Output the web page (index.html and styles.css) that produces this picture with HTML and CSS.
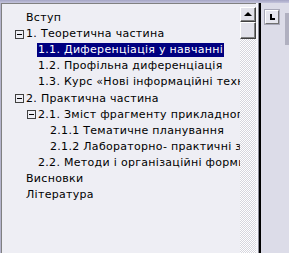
FILE: index.html
```html
<!DOCTYPE html>
<html lang="uk">
  <head>
    <meta charset="UTF-8">
    <meta name="viewport" content="width=device-width, initial-scale=1.0">
    <title>Зміст</title>
    <link rel="stylesheet" href="styles.css">
  </head>
  <body>
    <div class="topbar"></div>

    <div class="main">
      <div class="tree">
        <div class="row lvl0"><span class="slot"></span><span class="label">Вступ</span></div>
        <div class="row lvl0">
          <span class="slot"><svg class="toggle" width="9" height="9" viewBox="0 0 9 9"><rect x="0.5" y="0.5" width="8" height="8" fill="none" stroke="#404040"/><path d="M2 4.5h5" stroke="#000"/></svg></span>
          <span class="label">1. Теоретична частина</span>
        </div>
        <div class="row lvl1"><span class="slot"></span><span class="label selected">1.1. Диференціація у навчанні</span></div>
        <div class="row lvl1"><span class="slot"></span><span class="label">1.2. Профільна диференціація</span></div>
        <div class="row lvl1"><span class="slot"></span><span class="label">1.3. Курс «Нові інформаційні технології»</span></div>
        <div class="row lvl0">
          <span class="slot"><svg class="toggle" width="9" height="9" viewBox="0 0 9 9"><rect x="0.5" y="0.5" width="8" height="8" fill="none" stroke="#404040"/><path d="M2 4.5h5" stroke="#000"/></svg></span>
          <span class="label">2. Практична частина</span>
        </div>
        <div class="row lvl1">
          <span class="slot"><svg class="toggle" width="9" height="9" viewBox="0 0 9 9"><rect x="0.5" y="0.5" width="8" height="8" fill="none" stroke="#404040"/><path d="M2 4.5h5" stroke="#000"/></svg></span>
          <span class="label">2.1. Зміст фрагменту прикладного курсу</span>
        </div>
        <div class="row lvl2"><span class="slot"></span><span class="label">2.1.1 Тематичне планування</span></div>
        <div class="row lvl2"><span class="slot"></span><span class="label">2.1.2 Лабораторно- практичні заняття</span></div>
        <div class="row lvl1"><span class="slot"></span><span class="label">2.2. Методи і організаційні форми навчання</span></div>
        <div class="row lvl0"><span class="slot"></span><span class="label">Висновки</span></div>
        <div class="row lvl0"><span class="slot"></span><span class="label">Література</span></div>
      </div>

      <div class="vscroll">
        <div class="sbtn"><span class="arrow-up"></span></div>
        <div class="sbtn thumb"></div>
        <div class="track"></div>
      </div>

      <div class="splitter"></div>

      <div class="side">
        <div class="side-btn"><span class="corner"></span></div>
        <div class="side-bar"></div>
      </div>
    </div>
  </body>
</html>
```

FILE: styles.css
```css
html,
body {
  margin: 0;
  height: 100%;
}
body {
  font-family: "DejaVu Sans", Verdana, sans-serif;
  font-size: 11px;
  letter-spacing: 0.3px;
  color: #000;
  background-color: #b4b4cc;
  display: flex;
  flex-direction: column;
  overflow: hidden;
}
.topbar {
  height: 3px;
  background: linear-gradient(#a4a4c4, #c4c4dc);
}
.main {
  flex: 1;
  display: flex;
  padding-left: 1px;
  min-height: 0;
}
.tree {
  width: 238px;
  border-left: 1px solid #808080;
  border-top: 1px solid #808080;
  background-color: #eeeef4;
  padding-top: 6px;
  overflow: hidden;
}
.row {
  display: flex;
  align-items: center;
  height: 16.1px;
  white-space: nowrap;
}
.lvl0 {
  padding-left: 13px;
}
.lvl1 {
  padding-left: 25px;
}
.lvl2 {
  padding-left: 37px;
}
.slot {
  display: flex;
  align-items: center;
  flex: 0 0 11px;
  width: 11px;
  height: 16px;
}
.toggle {
  display: block;
}
.label {
  display: inline-block;
  line-height: 14px;
  padding: 0 1px 0 0;
}
.selected {
  background-color: #000080;
  color: #fff;
  margin-left: -1px;
  padding-left: 1px;
}
.vscroll {
  width: 16px;
  display: flex;
  flex-direction: column;
  border-top: 1px solid #808080;
  padding-top: 3px;
  background-color: #eeeef4;
}
.sbtn {
  box-sizing: border-box;
  height: 15px;
  background-color: #e2e2ea;
  border: 1px solid;
  border-color: #ffffff #404040 #404040 #ffffff;
  box-shadow: inset -1px -1px 0 #808080;
  display: flex;
  align-items: center;
  justify-content: center;
}
.thumb {
  height: 17px;
}
.arrow-up {
  width: 0;
  height: 0;
  border-left: 4px solid transparent;
  border-right: 4px solid transparent;
  border-bottom: 4px solid #000;
  margin-top: -1px;
}
.track {
  flex: 1;
  background: repeating-conic-gradient(#ffffff 0 25%, #d6d6de 0 50%) 0 0 / 2px 2px;
}
.splitter {
  width: 2px;
  background-color: #f6f6fa;
  border-right: 1px solid #8c8c98;
  box-shadow: 2px 0 0 #000;
  margin-right: 2px;
}
.side {
  flex: 1;
  display: flex;
  align-items: flex-start;
  background-color: #dcdce8;
  padding: 7px 0 0 4px;
}
.side-btn {
  box-sizing: border-box;
  width: 14px;
  height: 14px;
  border: 1px solid;
  border-color: #ffffff #707070 #707070 #ffffff;
  outline: 1px solid #a8a8b8;
  outline-offset: 0;
  background-color: #e6e6ee;
  display: flex;
  align-items: center;
  justify-content: center;
}
.corner {
  width: 3px;
  height: 4px;
  border-left: 2px solid #000;
  border-bottom: 2px solid #000;
  margin-left: 1px;
}
.side-bar {
  margin-left: auto;
  margin-top: 3px;
  width: 4px;
  height: 32px;
  background-color: #b0b0c0;
}
```
